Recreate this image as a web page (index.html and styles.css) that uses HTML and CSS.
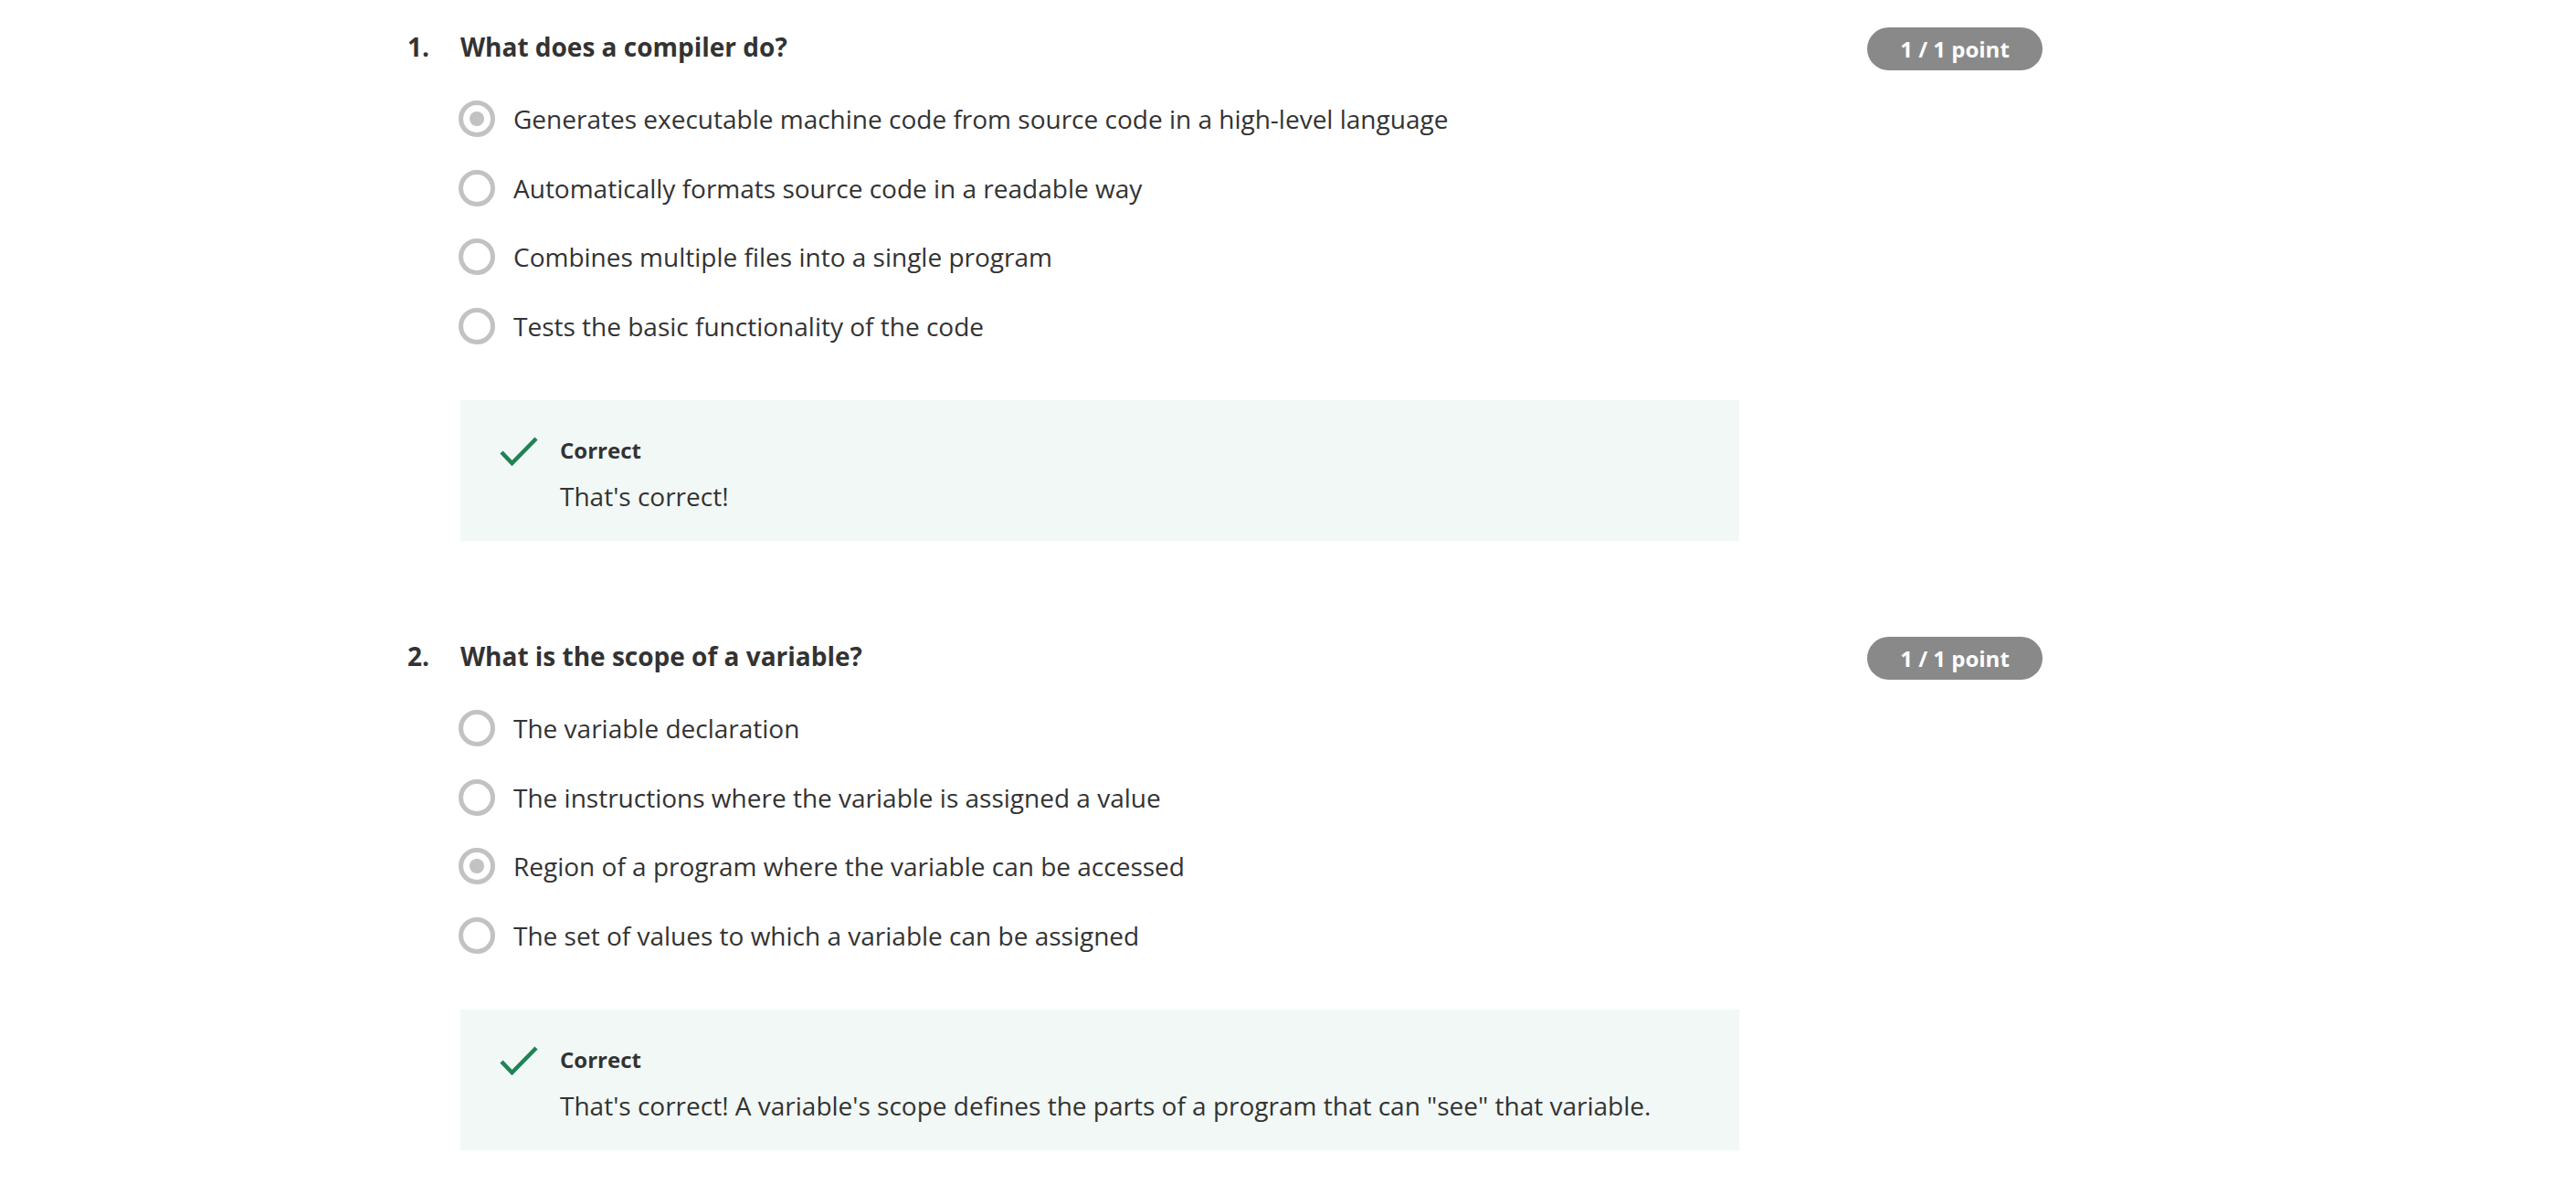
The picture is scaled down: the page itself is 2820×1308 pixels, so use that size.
FILE: index.html
```html
<!DOCTYPE html>
<html lang="en">
<head>
<meta charset="utf-8">
<title>Quiz results</title>
<link rel="stylesheet" href="styles.css">
</head>
<body>
<main class="quiz">
  <section class="question">
    <header class="q-head">
      <div class="q-title"><span class="q-num">1.</span><h2 class="q-text">What does a compiler do?</h2></div>
      <span class="badge">1 / 1 point</span>
    </header>
    <ul class="options">
      <li class="option"><svg class="radio" viewBox="0 0 40 40"><circle cx="20" cy="20" r="17.5" class="ring"/><circle cx="20" cy="20" r="8" class="dot"/></svg><span>Generates executable machine code from source code in a high-level language</span></li>
      <li class="option"><svg class="radio" viewBox="0 0 40 40"><circle cx="20" cy="20" r="17.5" class="ring"/></svg><span>Automatically formats source code in a readable way</span></li>
      <li class="option"><svg class="radio" viewBox="0 0 40 40"><circle cx="20" cy="20" r="17.5" class="ring"/></svg><span>Combines multiple files into a single program</span></li>
      <li class="option"><svg class="radio" viewBox="0 0 40 40"><circle cx="20" cy="20" r="17.5" class="ring"/></svg><span>Tests the basic functionality of the code</span></li>
    </ul>
    <div class="feedback">
      <svg class="check" viewBox="0 0 42 32"><polyline points="2,17 13.5,29 40,2"/></svg>
      <div class="fb-body">
        <div class="fb-title">Correct</div>
        <p class="fb-text">That's correct!</p>
      </div>
    </div>
  </section>
  <section class="question">
    <header class="q-head">
      <div class="q-title"><span class="q-num">2.</span><h2 class="q-text">What is the scope of a variable?</h2></div>
      <span class="badge">1 / 1 point</span>
    </header>
    <ul class="options">
      <li class="option"><svg class="radio" viewBox="0 0 40 40"><circle cx="20" cy="20" r="17.5" class="ring"/></svg><span>The variable declaration</span></li>
      <li class="option"><svg class="radio" viewBox="0 0 40 40"><circle cx="20" cy="20" r="17.5" class="ring"/></svg><span>The instructions where the variable is assigned a value</span></li>
      <li class="option"><svg class="radio" viewBox="0 0 40 40"><circle cx="20" cy="20" r="17.5" class="ring"/><circle cx="20" cy="20" r="8" class="dot"/></svg><span>Region of a program where the variable can be accessed</span></li>
      <li class="option"><svg class="radio" viewBox="0 0 40 40"><circle cx="20" cy="20" r="17.5" class="ring"/></svg><span>The set of values to which a variable can be assigned</span></li>
    </ul>
    <div class="feedback">
      <svg class="check" viewBox="0 0 42 32"><polyline points="2,17 13.5,29 40,2"/></svg>
      <div class="fb-body">
        <div class="fb-title">Correct</div>
        <p class="fb-text">That's correct! A variable's scope defines the parts of a program that can "see" that variable.</p>
      </div>
    </div>
  </section>
</main>
</body>
</html>
```
FILE: styles.css
```css
html, body {
  margin: 0;
  padding: 0;
  background: #ffffff;
}
body {
  font-family: "Open Sans", "Noto Sans", "Liberation Sans", sans-serif;
  color: #333333;
}
.quiz {
  width: 1790px;
  padding: 30px 0 0 446px;
}
.question {
  margin-bottom: 105px;
}
.q-head {
  display: flex;
  justify-content: space-between;
  align-items: flex-start;
  height: 47px;
}
.q-title {
  display: flex;
  padding-top: 1px;
  font-size: 28px;
  line-height: 40px;
  font-weight: 700;
}
.q-num {
  width: 58px;
}
.q-text {
  margin: 0;
  font-size: 28px;
  line-height: 40px;
  font-weight: 700;
}
.badge {
  display: flex;
  align-items: center;
  justify-content: center;
  width: 192px;
  height: 47px;
  border-radius: 24px;
  background: #898989;
  color: #ffffff;
  font-size: 24px;
  font-weight: 700;
}
.options {
  list-style: none;
  margin: 33px 0 0 56px;
  padding: 0;
  display: flex;
  flex-direction: column;
  gap: 35.5px;
}
.option {
  display: flex;
  align-items: center;
  gap: 20px;
  height: 40px;
  font-size: 28px;
  line-height: 40px;
}
.radio {
  width: 40px;
  height: 40px;
  flex: none;
}
.ring {
  fill: none;
  stroke: #c2c2c2;
  stroke-width: 5;
}
.dot {
  fill: #c2c2c2;
}
.feedback {
  margin: 61.5px 0 0 58px;
  width: 1400px;
  height: 154px;
  box-sizing: border-box;
  padding: 38.7px 0 0 43px;
  background: #f2f8f6;
  display: flex;
  align-items: flex-start;
  gap: 24px;
}
.check {
  width: 42px;
  height: 32px;
  flex: none;
  margin-top: 1px;
}
.check polyline {
  fill: none;
  stroke: #1f8354;
  stroke-width: 4.5;
}
.fb-title {
  font-size: 24px;
  line-height: 32px;
  font-weight: 700;
}
.fb-text {
  margin: 14.3px 0 0;
  font-size: 28px;
  line-height: 40px;
}
```
